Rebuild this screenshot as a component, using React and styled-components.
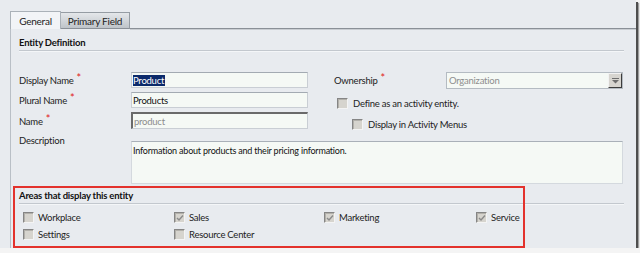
import React from "react";
import styled, { createGlobalStyle } from "styled-components";

const Global = createGlobalStyle`
  html, body { margin: 0; padding: 0; background: #f4f4f4; }
  body { font-family: Lato, "Noto Sans", sans-serif; font-size: 9.5px; letter-spacing: -0.25px; color: #1a1a1a; }
  * { box-sizing: border-box; }
`;

const Frame = styled.div`
  position: relative;
  width: 636px;
  height: 248px;
  background: #e8ebef;
  box-shadow: 2px 2px 0 #4e4e4e, 3px 3px 1px rgba(0,0,0,0.35);
  padding-top: 11px;
  padding-left: 10px;
  display: flex;
  flex-direction: column;
`;

const TabStrip = styled.div`
  display: flex;
  align-items: flex-end;
  height: 18px;
`;

const Tab = styled.div`
  height: ${p => (p.$active ? "18px" : "17px")};
  width: ${p => p.$w}px;
  display: flex;
  align-items: center;
  justify-content: center;
  font-size: 10px;
  color: #222;
  border: 1px solid ${p => (p.$active ? "#aab1b8" : "#959ca3")};
  border-bottom: ${p => (p.$active ? "none" : "1px solid #8a9097")};
  border-left: ${p => (p.$active ? "1px solid #aab1b8" : "none")};
  background: ${p => (p.$active ? "#f2f4f7" : "linear-gradient(#e4e7ea, #bfc4c9)")};
`;

const TabFill = styled.div`
  flex: 1;
  border-bottom: 1px solid #8a9097;
  box-shadow: 0 1px 0 #c9cdd2;
`;

const Panel = styled.div`
  flex: 1;
  border-left: 1px solid #b9bfc6;
  padding: 7px 12px 0 8px;
  display: flex;
  flex-direction: column;
`;

const SectionTitle = styled.div`
  font-weight: bold;
  font-size: 9.5px;
  letter-spacing: -0.2px;
  line-height: 14px;
  color: #111;
  border-bottom: 1px solid #c3c8ce;
  box-shadow: 0 1px 0 #f4f6f8;
  margin-top: ${p => p.$top || 0}px;
`;

const FormGrid = styled.div`
  margin-top: 21px;
  display: grid;
  grid-template-columns: 112px 177px 26px 112px 177px;
  grid-template-rows: 20px 20px 21px 53px;
`;

const Label = styled.div`
  line-height: 16px;
  color: #222;
  grid-column: ${p => p.$col};
  margin-top: ${p => p.$top || 0}px;
`;

const Req = styled.span`
  color: #e02020;
  margin-left: 3px;
  font-size: 11px;
  position: relative;
  top: -2px;
`;

const Input = styled.div`
  grid-column: 2;
  height: ${p => (p.$inset ? "17px" : "16px")};
  background: #f5f9f5;
  border: 1px solid #c9ced4;
  border-top-color: #a3aab2;
  ${p => p.$inset && `border-top: 2px solid #6a6a6a; border-left: 2px solid #6a6a6a;`}
  padding-left: 1px;
  display: flex;
  align-items: center;
  color: ${p => (p.$muted ? "#8c8c8c" : "#111")};
`;

const Selected = styled.span`
  background: #0b2a6b;
  color: #fff;
  line-height: 11px;
  padding: 0 1px 0 0;
`;

const Select = styled.div`
  grid-column: 5;
  height: 17px;
  background: #f5f9f5;
  border: 1px solid #b4bbc2;
  display: flex;
  align-items: center;
  padding-left: 2px;
  color: #8e8e8e;
`;

const SelectText = styled.span`
  flex: 1;
`;

const DropButton = styled.div`
  width: 14px;
  height: 15px;
  background: #d7d5d0;
  border: 1px solid;
  border-color: #f2f2f2 #3c3c3c #3c3c3c #f2f2f2;
  display: flex;
  align-items: center;
  justify-content: center;
`;

const CheckRow = styled.div`
  grid-column: 4 / span 2;
  display: flex;
  align-items: center;
  gap: 5px;
  margin-top: ${p => p.$top || 0}px;
  padding-left: ${p => p.$indent || 0}px;
  height: 16px;
  color: #222;
`;

const Box = styled.span`
  width: 11px;
  height: 11px;
  flex: none;
  background: #d6d4ce;
  border: 1px solid;
  border-color: #858585 #f4f4f4 #f4f4f4 #858585;
  box-shadow: inset 1px 1px 0 #b2b0aa;
  display: flex;
  align-items: center;
  justify-content: center;
`;

const TextArea = styled.div`
  grid-column: 2 / span 4;
  margin-top: 8px;
  height: 43px;
  background: #f5f9f5;
  border: 1px solid #d4d9de;
  border-top-color: #a9b0b8;
  padding: 3px 1px;
  font-size: 9px;
  letter-spacing: -0.2px;
  line-height: 12px;
  color: #111;
`;

const AreaGrid = styled.div`
  margin-top: 5px;
  padding-left: 4px;
  display: grid;
  grid-template-columns: 151px 150px 152px 120px;
  grid-auto-rows: 17px;
`;

const AreaItem = styled.div`
  display: flex;
  align-items: center;
  gap: 4px;
  color: #222;
  grid-column: ${p => p.$col};
  grid-row: ${p => p.$row};
`;

const Annotation = styled.div`
  position: absolute;
  left: 13px;
  top: 186px;
  width: 512px;
  height: 62px;
  border: 2px solid #e3322c;
  pointer-events: none;
`;

const Check = ({ checked }) => (
  <Box>
    {checked && (
      <svg width="8" height="8" viewBox="0 0 8 8">
        <path d="M1 4 L3 6 L7 1.5" fill="none" stroke="#8a8a8a" strokeWidth="1.4" />
      </svg>
    )}
  </Box>
);

const areas = [
  { label: "Workplace", col: 1, row: 1, checked: false },
  { label: "Sales", col: 2, row: 1, checked: true },
  { label: "Marketing", col: 3, row: 1, checked: true },
  { label: "Service", col: 4, row: 1, checked: true },
  { label: "Settings", col: 1, row: 2, checked: false },
  { label: "Resource Center", col: 2, row: 2, checked: false },
];

export default function App() {
  return (
    <>
      <Global />
      <Frame>
        <TabStrip>
          <Tab $active $w={51}>General</Tab>
          <Tab $w={69}>Primary Field</Tab>
          <TabFill />
        </TabStrip>
        <Panel>
          <SectionTitle>Entity Definition</SectionTitle>
          <FormGrid>
            <Label $col={1}>Display Name<Req>*</Req></Label>
            <Input><Selected>Product</Selected></Input>
            <Label $col={4}>Ownership<Req>*</Req></Label>
            <Select>
              <SelectText>Organization</SelectText>
              <DropButton>
                <svg width="7" height="6" viewBox="0 0 7 6">
                  <rect x="0" y="0" width="7" height="1" fill="#6e6e6e" />
                  <path d="M0 2 H7 L3.5 5.5 Z" fill="#6e6e6e" />
                </svg>
              </DropButton>
            </Select>

            <Label $col={1}>Plural Name<Req>*</Req></Label>
            <Input>Products</Input>
            <CheckRow $top={3} $indent={3}><Check /> Define as an activity entity.</CheckRow>

            <Label $col={1} $top={1}>Name<Req>*</Req></Label>
            <Input $inset $muted>product</Input>
            <CheckRow $top={4} $indent={18}><Check /> Display in Activity Menus</CheckRow>

            <Label $col={1}>Description</Label>
            <TextArea>Information about products and their pricing information.</TextArea>
          </FormGrid>
          <SectionTitle $top={3}>Areas that display this entity</SectionTitle>
          <AreaGrid>
            {areas.map(a => (
              <AreaItem key={a.label} $col={a.col} $row={a.row}>
                <Check checked={a.checked} />
                {a.label}
              </AreaItem>
            ))}
          </AreaGrid>
        </Panel>
        <Annotation />
      </Frame>
    </>
  );
}
